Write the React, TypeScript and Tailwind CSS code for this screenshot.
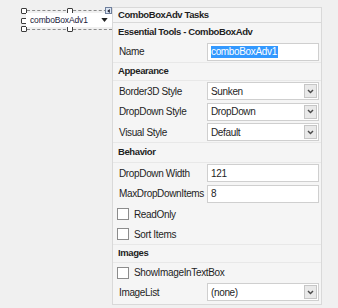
import React from 'react';

const font = { fontFamily: '"Liberation Sans", Arial, sans-serif' };

function Chevron() {
  return (
    <svg viewBox="0 0 8 6" className="w-[7px] h-[5px]" aria-hidden="true">
      <path d="M1 1.2 4 4.2 7 1.2" fill="none" stroke="#4a4a4a" strokeWidth="1.7" />
    </svg>
  );
}

function TextField({ value, selected }: { value: string; selected?: boolean }) {
  return (
    <div className="w-[112px] h-[18px] bg-white border border-[#cfcfcf] flex items-center pl-[3px] text-[10px] tracking-[-0.35px] text-[#1e1e1e]">
      {selected ? <span className="bg-[#3399ff] text-white leading-[12px] pr-[1px]">{value}</span> : <span>{value}</span>}
    </div>
  );
}

function SelectField({ value }: { value: string }) {
  return (
    <div className="w-[112px] h-[18px] bg-white border border-[#cfcfcf] flex items-center text-[10px] tracking-[-0.35px] text-[#1e1e1e]">
      <span className="flex-1 pl-[3px]">{value}</span>
      <div className="w-[13px] h-[14px] mr-[1px] bg-[#e9e9e9] border border-[#c6c6c6] flex items-center justify-center">
        <Chevron />
      </div>
    </div>
  );
}

function Row({ label, h, children }: { label: string; h: string; children: React.ReactNode }) {
  return (
    <div className={`${h} flex items-center justify-between pl-[6px] pr-[2px]`}>
      <span className="text-[10px] tracking-[-0.35px] text-[#1e1e1e]">{label}</span>
      {children}
    </div>
  );
}

function Check({ label, h }: { label: string; h: string }) {
  return (
    <div className={`${h} flex items-center pl-[4px] gap-[5px]`}>
      <div className="w-[12px] h-[12px] bg-white border border-[#8c8c8c]" />
      <span className="text-[10px] tracking-[-0.35px] text-[#1e1e1e]">{label}</span>
    </div>
  );
}

function Section({ title, h }: { title: string; h: string }) {
  return (
    <div className={`${h} flex items-center pl-[5px] border-t border-b border-[#e8e8e8] text-[9.5px] tracking-[-0.4px] font-bold text-[#1e1e1e]`}>
      {title}
    </div>
  );
}

function Handle() {
  return <div className="w-[6px] h-[6px] bg-white border border-[#3c3c3c] rounded-[1px]" />;
}

export default function App() {
  return (
    <div className="w-[338px] h-[308px] bg-[#f0f0f0] relative overflow-hidden" style={font}>
      {/* designer combo box */}
      <div className="absolute left-[21px] top-[7px] w-[91px] h-[26px]">
        <div className="absolute left-[6px] right-0 top-[3px] border-t border-dashed border-[#8a8a8a]" />
        <div className="absolute left-[6px] right-0 top-[22px] border-t border-dashed border-[#8a8a8a]" />
        <div className="absolute left-0 top-[1px]"><Handle /></div>
        <div className="absolute left-[46px] top-[1px]"><Handle /></div>
        <div className="absolute left-0 top-[11px]"><Handle /></div>
        <div className="absolute left-0 top-[19px]"><Handle /></div>
        <div className="absolute left-[46px] top-[19px]"><Handle /></div>
        <div className="absolute left-[5px] top-[6px] w-[87px] h-[14px] bg-white flex items-center">
          <span className="flex-1 pl-[4px] text-[8.5px] tracking-[-0.15px] text-[#1a1a3a]">comboBoxAdv1</span>
          <svg viewBox="0 0 8 5" className="w-[7px] h-[4px] mr-[5px]" aria-hidden="true">
            <path d="M0 0h8L4 5Z" fill="#222" />
          </svg>
        </div>
        <div className="absolute left-[84px] top-0 w-[7px] h-[7px] bg-[#dce6f4] border border-[#6f7f9c] flex items-center justify-center">
          <svg viewBox="0 0 4 6" className="w-[3px] h-[4px]" aria-hidden="true">
            <path d="M4 0v6L0 3Z" fill="#223" />
          </svg>
        </div>
      </div>

      {/* smart tag panel */}
      <div className="absolute left-[112px] top-[7px] w-[210px] h-[298px] bg-[#f5f5f5] border border-[#d9d9d9]">
        <div className="h-[15px] flex items-center pl-[5px] text-[9.5px] tracking-[-0.4px] font-bold text-[#1e1e1e] border-b border-[#d9d9d9]">
          ComboBoxAdv Tasks
        </div>
        <div className="h-[18px] flex items-center pl-[5px] text-[9.5px] tracking-[-0.4px] font-bold text-[#1e1e1e]">
          Essential Tools - ComboBoxAdv
        </div>
        <Row label="Name" h="h-[21px]"><TextField value="comboBoxAdv1" selected /></Row>
        <Section title="Appearance" h="h-[19px]" />
        <Row label="Border3D Style" h="h-[20px]"><SelectField value="Sunken" /></Row>
        <Row label="DropDown Style" h="h-[21px]"><SelectField value="DropDown" /></Row>
        <Row label="Visual Style" h="h-[20px]"><SelectField value="Default" /></Row>
        <Section title="Behavior" h="h-[21px]" />
        <Row label="DropDown Width" h="h-[20px]"><TextField value="121" /></Row>
        <Row label="MaxDropDownItems" h="h-[21px]"><TextField value="8" /></Row>
        <Check label="ReadOnly" h="h-[20px]" />
        <Check label="Sort Items" h="h-[20px]" />
        <Section title="Images" h="h-[19px]" />
        <Check label="ShowImageInTextBox" h="h-[19px]" />
        <Row label="ImageList" h="h-[20px]"><SelectField value="(none)" /></Row>
      </div>
    </div>
  );
}
